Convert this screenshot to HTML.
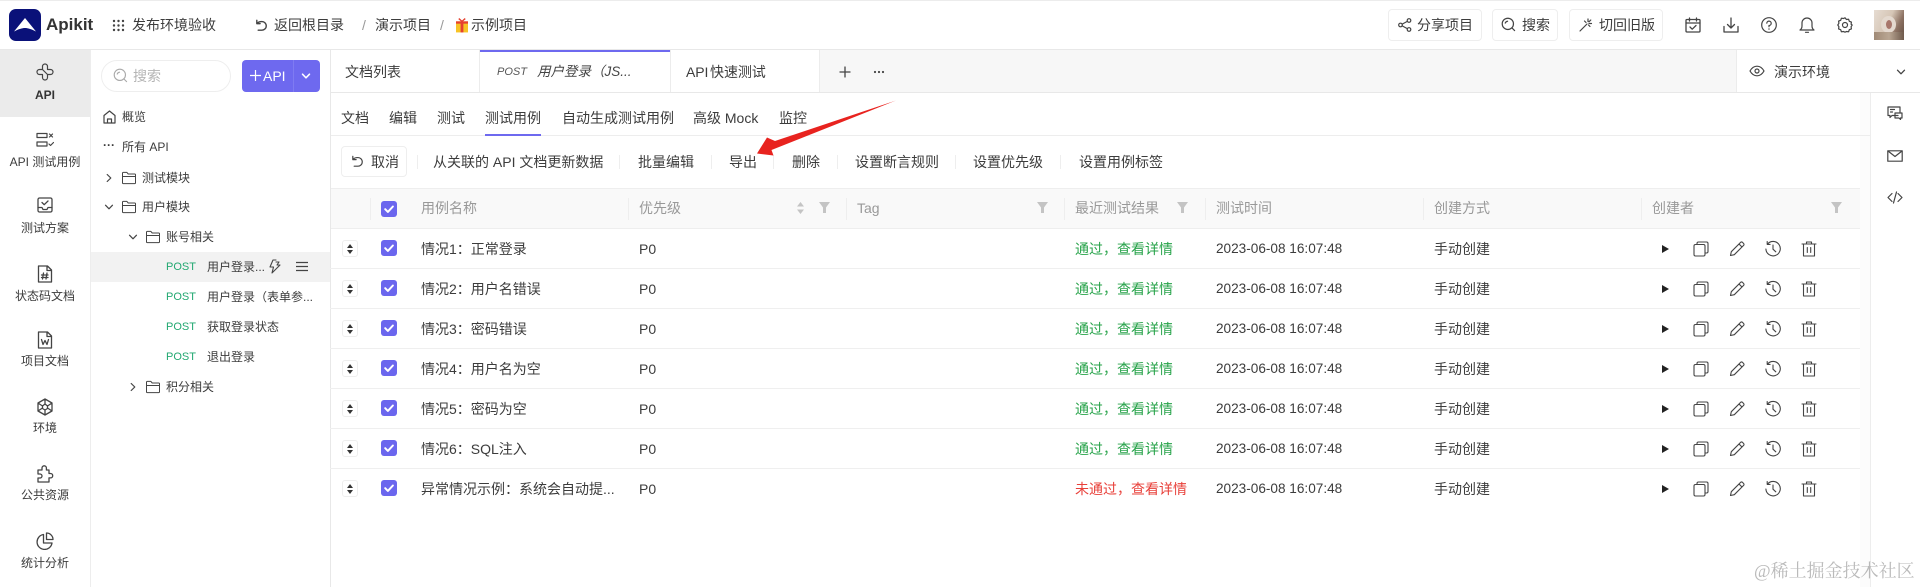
<!DOCTYPE html>
<html lang="zh-CN"><head><meta charset="utf-8"><title>Apikit</title>
<style>
*{box-sizing:border-box}
html,body{margin:0;padding:0;width:1920px;height:587px;overflow:hidden;background:#fff}
body{position:relative;font:14px/20px "Liberation Sans","Noto Sans CJK SC",sans-serif;color:#3c3c3c}
.t{position:absolute;white-space:nowrap;line-height:20px}
.s{font-size:12px}
.a{position:absolute}
svg.i{position:absolute;fill:none;stroke:currentColor;stroke-width:1.5;stroke-linecap:round;stroke-linejoin:round;color:#444}
.btn{position:absolute;border:1px solid #eeeeee;border-radius:4px;background:#fff}
.sep{position:absolute;width:1px;background:#eeeeee}
.h{position:absolute;color:#999;white-space:nowrap;top:198px;line-height:20px}
.r{position:absolute;left:330px;width:1530px;height:40px;border-bottom:1px solid #efefef}
.r .t{top:10px}
.d{position:absolute;left:12px;top:11px;width:16px;height:17px;border:1px solid #eee;border-radius:3px;background:#fff}
.d:before,.d:after{content:"";position:absolute;left:4px;border-left:3px solid transparent;border-right:3px solid transparent}
.d:before{top:3px;border-bottom:4px solid #333}
.d:after{top:9px;border-top:4px solid #333}
.c{position:absolute;width:16px;height:16px;border-radius:3px;background:#6b66ee}
.c svg{position:absolute;left:2px;top:2px;width:12px;height:12px;fill:none;stroke:#fff;stroke-width:2;stroke-linecap:round;stroke-linejoin:round}
.ok{color:#27a34a}.no{color:#e8403a}
.post{color:#22a871;font-size:11px}
.ti{width:18px;height:18px;top:11px}
</style></head><body>
<svg width="0" height="0" style="position:absolute">
<defs>
<symbol id="folder" viewBox="0 0 16 16"><path d="M1.5 3.2a.8.8 0 0 1 .8-.8h3.6l1.3 1.6h6.5a.8.8 0 0 1 .8.8v8a.8.8 0 0 1-.8.8H2.300a.8.8 0 0 1-.8-.8zM1.500 6.500h13"/></symbol>
<symbol id="copy" viewBox="0 0 18 18"><rect x="2" y="4.500" width="11" height="11.500" rx="1.500"/><path d="M5 4.500V3.500A1.500 1.500 0 0 1 6.500 2h8A1.500 1.500 0 0 1 16 3.500v8a1.500 1.500 0 0 1-1.500 1.500H13"/></symbol>
<symbol id="pen" viewBox="0 0 18 18"><path d="M2.500 15.500l.8-3.800L12.600 2.400a1.300 1.300 0 0 1 1.900 0l1.100 1.100a1.300 1.300 0 0 1 0 1.900L6.300 14.700zM11 4l3 3"/></symbol>
<symbol id="hist" viewBox="0 0 18 18"><path d="M3.600 4A7.200 7.200 0 1 1 1.900 9M3.200 1.500V4.400H6.100M9 5v4.200l2.800 2.600"/></symbol>
<symbol id="trash" viewBox="0 0 18 18"><path d="M2 4h14M6.500 4V2h5v2M3.500 4v12h11V4M7.300 7.500v5M10.700 7.500v5"/></symbol>
<symbol id="check" viewBox="0 0 12 12"><path d="M2.200 6.200l2.700 2.700 5-5.400"/></symbol>
<symbol id="chev" viewBox="0 0 12 12"><path d="M2.500 4.200L6 7.800l3.500-3.600"/></symbol>
<symbol id="chevr" viewBox="0 0 12 12"><path d="M4.200 2.500L7.800 6l-3.600 3.500"/></symbol>
<symbol id="undo" viewBox="0 0 16 16"><path d="M3 2.500V6h3.500M3.200 6C4 4.500 5.500 3.800 8.500 3.800a4.600 4.600 0 0 1 0 9.200H4.500"/></symbol>
<symbol id="search" viewBox="0 0 16 16"><circle cx="7.300" cy="7.300" r="6"/><path d="M11.700 11.700l2.800 2.800M4.500 6.500a3 3 0 0 1 2.500-2"/></symbol>
</defs>
</svg>

<!-- top bar -->
<div class="a" style="left:0;top:0;width:1920px;height:1px;background:#ececec"></div>
<div class="a" style="left:0;top:49px;width:1920px;height:1px;background:#e8e8e8"></div>
<div class="a" style="left:9px;top:9px;width:32px;height:32px;border-radius:7px;background:#0a1179"></div>
<svg class="a" style="left:9px;top:9px" width="32" height="32" viewBox="0 0 32 32"><path d="M16 9L27 22.500C22 20 19 19 16 19 13 19 10 20 5 22.500z" fill="#fff"/></svg>
<div class="t" style="left:46px;top:15px;font-size:17px;font-weight:700;color:#333">Apikit</div>
<svg class="a" style="left:112px;top:19px" width="13" height="13" viewBox="0 0 13 13" fill="#444"><circle cx="2" cy="2" r="1.200"/><circle cx="6.500" cy="2" r="1.200"/><circle cx="11" cy="2" r="1.200"/><circle cx="2" cy="6.500" r="1.200"/><circle cx="6.500" cy="6.500" r="1.200"/><circle cx="11" cy="6.500" r="1.200"/><circle cx="2" cy="11" r="1.200"/><circle cx="6.500" cy="11" r="1.200"/><circle cx="11" cy="11" r="1.200"/></svg>
<div class="t" style="left:132px;top:15px">发布环境验收</div>
<svg class="i" style="left:254px;top:18px" width="15" height="15" viewBox="0 0 16 16"><use href="#undo"/></svg>
<div class="t" style="left:274px;top:15px">返回根目录</div>
<div class="t" style="left:362px;top:15px;color:#999">/</div>
<div class="t" style="left:375px;top:15px">演示项目</div>
<div class="t" style="left:440px;top:15px;color:#999">/</div>
<svg class="a" style="left:456px;top:18px" width="12" height="15" viewBox="0 0 13 15"><rect x="0" y="3" width="13" height="12" fill="#f7c325"/><rect x="5" y="3" width="3" height="12" fill="#e6402f"/><rect x="0" y="3" width="13" height="2.500" fill="#e6402f"/><path d="M6.500 3L3 0M6.500 3L10 0" stroke="#e6402f" stroke-width="1.500"/></svg>
<div class="t" style="left:471px;top:15px">示例项目</div>

<div class="btn" style="left:1388px;top:9px;width:94px;height:32px"></div>
<svg class="i" style="left:1398px;top:18px;stroke-width:1.200" width="14" height="14" viewBox="0 0 14 14"><circle cx="2.500" cy="7" r="1.800"/><circle cx="11" cy="2.500" r="1.800"/><circle cx="11" cy="11.500" r="1.800"/><path d="M4.200 6.100l5.100-2.700M4.200 7.900l5.100 2.700"/></svg>
<div class="t" style="left:1417px;top:15px">分享项目</div>
<div class="btn" style="left:1492px;top:9px;width:66px;height:32px"></div>
<svg class="i" style="left:1501px;top:17px;stroke-width:1.300" width="15" height="15"><use href="#search"/></svg>
<div class="t" style="left:1522px;top:15px">搜索</div>
<div class="btn" style="left:1569px;top:9px;width:94px;height:32px"></div>
<svg class="i" style="left:1579px;top:18px;stroke-width:1.200" width="14" height="14" viewBox="0 0 14 14"><path d="M1 13L8 6M9 1v2.500M12.500 5.500H10M11.800 2l-1.800 1.800M5.500 3l1.500 1.500M11 8.500L9.500 7"/></svg>
<div class="t" style="left:1599px;top:15px">切回旧版</div>

<svg class="i" style="left:1685px;top:17px;stroke-width:1.300" width="16" height="16" viewBox="0 0 16 16"><rect x="1" y="2.500" width="14" height="12.500" rx="1"/><path d="M1 6h14M4.500 1v3M11.500 1v3M5 10l2.200 2.200L11 8.500"/></svg>
<svg class="i" style="left:1723px;top:17px;stroke-width:1.300" width="16" height="16" viewBox="0 0 16 16"><path d="M1 9.500V15h14V9.500M8 1v9.500M4.500 7.500L8 11l3.500-3.500"/></svg>
<svg class="i" style="left:1761px;top:17px;stroke-width:1.200" width="16" height="16" viewBox="0 0 16 16"><circle cx="8" cy="8" r="7.300"/><path d="M5.800 6.200A2.200 2.200 0 1 1 8 8.500v1.300M8 11.800v.4"/></svg>
<svg class="i" style="left:1799px;top:17px;stroke-width:1.200" width="16" height="16" viewBox="0 0 16 16"><path d="M1 13h14c-1.500-1-2-2-2-4V6A5 5 0 0 0 3 6v3c0 2-.5 3-2 4zM6.500 15.300h3"/></svg>
<svg class="i" style="left:1837px;top:17px;stroke-width:1.200" width="16" height="16" viewBox="0 0 16 16"><path d="M8 .8l1.400 1.700 2.200-.3.700 2.100 2.100.8-.3 2.200L15.200 8l-1.100 1.700.3 2.200-2.100.8-.7 2.100-2.200-.3L8 15.200l-1.400-.7-2.200.3-.7-2.100-2.100-.8.3-2.200L.8 8l1.100-1.700-.3-2.200 2.100-.8.700-2.100 2.200.3z"/><circle cx="8" cy="8" r="2.500"/></svg>
<div class="a" style="left:1874px;top:10px;width:30px;height:30px;background:linear-gradient(115deg,#e6dcd2 0%,#d6c6b6 45%,#8d7263 72%,#5f4c40 100%);overflow:hidden"><div class="a" style="left:7px;top:6px;width:15px;height:17px;border-radius:50%;background:#e4d9cf"></div><div class="a" style="left:12px;top:10px;width:6px;height:9px;border-radius:50%;background:#a8776c"></div><div class="a" style="left:0;top:22px;width:30px;height:8px;background:linear-gradient(90deg,#a08a76,#b9a693,#6f5a4c)"></div></div>

<!-- left sidebar -->
<div class="a" style="left:90px;top:50px;width:1px;height:537px;background:#ededed"></div>
<div class="a" style="left:0;top:50px;width:90px;height:67px;background:#ebebeb"></div>
<svg class="i" style="left:36px;top:63px;stroke-width:1.200" width="18" height="18" viewBox="0 0 18 18"><path d="M6.500 6.500V3.500a2.500 2.500 0 0 1 5 0V6.500H14.500a2.500 2.500 0 0 1 0 5H11.500V14.500a2.500 2.500 0 0 1-5 0V11.500H3.500a2.500 2.500 0 0 1 0-5H6.500M6.500 6.500C8 8 10 10 11.500 11.500"/></svg>
<div class="t s" style="left:0;width:90px;text-align:center;top:85px;font-weight:700;color:#333">API</div>
<svg class="i" style="left:36px;top:132px;stroke-width:1.200" width="18" height="16" viewBox="0 0 18 16"><rect x="1" y="1.500" width="10" height="4"/><rect x="1" y="10" width="10" height="4"/><path d="M13.500 2l3 3M16.500 2l-3 3M13 12l1.500 1.500 3-3"/></svg>
<div class="t s" style="left:0;width:90px;text-align:center;top:152px">API 测试用例</div>
<svg class="i" style="left:37px;top:197px;stroke-width:1.300" width="16" height="16" viewBox="0 0 16 16"><rect x="1" y="1" width="14" height="14" rx="1.500"/><path d="M1 10.500h4l1 2h4l1-2h4M5 5.500l2.200 2.200L11 4"/></svg>
<div class="t s" style="left:0;width:90px;text-align:center;top:218px">测试方案</div>
<svg class="i" style="left:37px;top:265px;stroke-width:1.300" width="16" height="18" viewBox="0 0 16 18"><path d="M1.500 1h9l4 4v12h-13zM10 1v4.500h4.500M6.500 8l-1 6M10 8l-1 6M4.500 10h6.500M4.500 12.500h6.500"/></svg>
<div class="t s" style="left:0;width:90px;text-align:center;top:286px">状态码文档</div>
<svg class="i" style="left:37px;top:331px;stroke-width:1.300" width="16" height="18" viewBox="0 0 16 18"><path d="M1.500 1h9l4 4v12h-13zM10 1v4.500h4.500M4.500 8.500l1.500 5 2-4 2 4 1.500-5"/></svg>
<div class="t s" style="left:0;width:90px;text-align:center;top:351px">项目文档</div>
<svg class="i" style="left:37px;top:398px;stroke-width:1.300" width="16" height="18" viewBox="0 0 16 18"><path d="M8 1l7 4v8l-7 4-7-4V5zM8 1v5M1 5l4.500 3M15 5l-4.500 3M8 17v-5M1 13l4.500-3M15 13l-4.500-3M8 6l2.500 2v2.500L8 12l-2.500-1.500V8z"/></svg>
<div class="t s" style="left:0;width:90px;text-align:center;top:418px">环境</div>
<svg class="i" style="left:36px;top:465px;stroke-width:1.300" width="18" height="18" viewBox="0 0 18 18"><path d="M2 5h4V3a2.200 2.200 0 0 1 4.400 0v2H13v3.500h1.500a2.200 2.200 0 0 1 0 4.400H13V17H2v-4h2a2 2 0 0 0 0-4H2z"/></svg>
<div class="t s" style="left:0;width:90px;text-align:center;top:485px">公共资源</div>
<svg class="i" style="left:36px;top:532px;stroke-width:1.300" width="18" height="18" viewBox="0 0 18 18"><path d="M7.500 2.500a7.500 7.500 0 1 0 8.500 8.500H7.500zM10.500 1a6.500 6.500 0 0 1 6.500 6.500h-6.500z"/></svg>
<div class="t s" style="left:0;width:90px;text-align:center;top:553px">统计分析</div>

<!-- tree -->
<div class="a" style="left:330px;top:50px;width:1px;height:537px;background:#e8e8e8"></div>
<div class="a" style="left:101px;top:60px;width:130px;height:32px;border:1px solid #eeeeee;border-radius:16px"></div>
<svg class="i" style="left:113px;top:68px;color:#aaa;stroke-width:1.200" width="15" height="15"><use href="#search"/></svg>
<div class="t" style="left:133px;top:66px;color:#b5b5b5">搜索</div>
<div class="a" style="left:242px;top:60px;width:78px;height:32px;border-radius:4px;background:#6e69ef"></div>
<div class="a" style="left:293px;top:60px;width:1px;height:32px;background:#7f7bf2"></div>
<svg class="a" style="left:250px;top:70px" width="11" height="11" viewBox="0 0 11 11"><path d="M5.500 0v11M0 5.500h11" stroke="#fff" stroke-width="1.200"/></svg>
<div class="t" style="left:263px;top:66px;color:#fff">API</div>
<svg class="i" style="left:300px;top:70px;color:#fff" width="12" height="12"><use href="#chev"/></svg>

<svg class="i" style="left:103px;top:110px;stroke-width:1.200" width="13" height="14" viewBox="0 0 13 14"><path d="M1 5.500L6.500 1 12 5.500V13H1zM4.500 13V9h4v4"/></svg>
<div class="t s" style="left:122px;top:107px">概览</div>
<div class="t s" style="left:103px;top:135px;font-weight:700">···</div>
<div class="t s" style="left:122px;top:137px">所有 API</div>
<svg class="i" style="left:103px;top:172px;stroke-width:1.200" width="12" height="12"><use href="#chevr"/></svg>
<svg class="i" style="left:121px;top:170px;stroke-width:1" width="16" height="16"><use href="#folder"/></svg>
<div class="t s" style="left:142px;top:168px">测试模块</div>
<svg class="i" style="left:103px;top:201px;stroke-width:1.200" width="12" height="12"><use href="#chev"/></svg>
<svg class="i" style="left:121px;top:199px;stroke-width:1" width="16" height="16"><use href="#folder"/></svg>
<div class="t s" style="left:142px;top:197px">用户模块</div>
<svg class="i" style="left:127px;top:231px;stroke-width:1.200" width="12" height="12"><use href="#chev"/></svg>
<svg class="i" style="left:145px;top:229px;stroke-width:1" width="16" height="16"><use href="#folder"/></svg>
<div class="t s" style="left:166px;top:227px">账号相关</div>
<div class="a" style="left:91px;top:252px;width:239px;height:30px;background:#f2f2f2"></div>
<div class="t post" style="left:166px;top:257px">POST</div>
<div class="t s" style="left:207px;top:257px">用户登录...</div>
<svg class="i" style="left:269px;top:259px;stroke-width:1.100" width="13" height="15" viewBox="0 0 13 15"><path d="M7 1H4L1 8h3.500L3 14l8-8H8l2-3H7"/></svg>
<svg class="i" style="left:296px;top:261px;stroke-width:1.300" width="12" height="11" viewBox="0 0 12 11"><path d="M0 1.500h12M0 5.500h12M0 9.500h12"/></svg>
<div class="t post" style="left:166px;top:287px">POST</div>
<div class="t s" style="left:207px;top:287px">用户登录（表单参...</div>
<div class="t post" style="left:166px;top:317px">POST</div>
<div class="t s" style="left:207px;top:317px">获取登录状态</div>
<div class="t post" style="left:166px;top:347px">POST</div>
<div class="t s" style="left:207px;top:347px">退出登录</div>
<svg class="i" style="left:127px;top:381px;stroke-width:1.200" width="12" height="12"><use href="#chevr"/></svg>
<svg class="i" style="left:145px;top:379px;stroke-width:1" width="16" height="16"><use href="#folder"/></svg>
<div class="t s" style="left:166px;top:377px">积分相关</div>

<!-- tabs -->
<div class="a" style="left:820px;top:50px;width:916px;height:42px;background:#f7f7f7"></div>
<div class="a" style="left:331px;top:92px;width:1589px;height:1px;background:#e8e8e8"></div>
<div class="a" style="left:479px;top:50px;width:1px;height:42px;background:#ececec"></div>
<div class="a" style="left:480px;top:50px;width:191px;height:2px;background:#6e69ef"></div>
<div class="a" style="left:670px;top:50px;width:1px;height:42px;background:#ececec"></div>
<div class="a" style="left:819px;top:50px;width:1px;height:42px;background:#ececec"></div>
<div class="a" style="left:1736px;top:50px;width:1px;height:42px;background:#ececec"></div>
<div class="t" style="left:345px;top:62px">文档列表</div>
<div class="t" style="left:497px;top:62px;font-size:11px;font-style:italic;color:#555">POST</div>
<div class="t" style="left:537px;top:62px;font-style:italic;font-size:13.500px;color:#444">用户登录（JS...</div>
<div class="t" style="left:686px;top:62px;word-spacing:-2px;letter-spacing:-.1px">API 快速测试</div>
<svg class="i" style="left:839px;top:66px;stroke-width:1.300" width="12" height="12" viewBox="0 0 12 12"><path d="M6 1v10M1 6h10"/></svg>
<svg class="a" style="left:873px;top:70px" width="12" height="4" viewBox="0 0 12 4" fill="#444"><circle cx="2" cy="2" r="1.100"/><circle cx="6" cy="2" r="1.100"/><circle cx="10" cy="2" r="1.100"/></svg>
<svg class="i" style="left:1749px;top:65px;stroke-width:1.200" width="16" height="12" viewBox="0 0 16 12"><path d="M1 6c1.800-3.200 4.200-4.800 7-4.800s5.200 1.600 7 4.800c-1.800 3.200-4.200 4.800-7 4.800S2.800 9.200 1 6z"/><circle cx="8" cy="6" r="2"/></svg>
<div class="t" style="left:1774px;top:62px">演示环境</div>
<svg class="i" style="left:1895px;top:66px;stroke-width:1.300" width="12" height="12"><use href="#chev"/></svg>

<!-- right panel -->
<div class="a" style="left:1860px;top:93px;width:10px;height:494px;background:#fcfcfc"></div>
<div class="a" style="left:1870px;top:93px;width:1px;height:494px;background:#ededed"></div>
<svg class="i" style="left:1887px;top:106px;stroke-width:1.200" width="16" height="14" viewBox="0 0 16 14"><path d="M11 9.500H5L3 11.500v-2H1V1h12v5M3.500 3.500h4M3.500 6h2M8 7h7v5h-1.500v1.500L12 12H8z"/></svg>
<svg class="i" style="left:1887px;top:150px;stroke-width:1.200" width="16" height="12" viewBox="0 0 16 12"><rect x=".8" y=".8" width="14.400" height="10.400"/><path d="M1 1l7 5.500L15 1"/></svg>
<svg class="i" style="left:1887px;top:191px;stroke-width:1.200" width="16" height="13" viewBox="0 0 16 13"><path d="M5 2.500L1 6.500l4 4M11 2.500l4 4-4 4M9.500 1L6.500 12"/></svg>

<!-- sub tabs -->
<div class="t" style="left:341px;top:108px">文档</div>
<div class="t" style="left:389px;top:108px">编辑</div>
<div class="t" style="left:437px;top:108px">测试</div>
<div class="t" style="left:485px;top:108px">测试用例</div>
<div class="t" style="left:562px;top:108px">自动生成测试用例</div>
<div class="t" style="left:693px;top:108px">高级 Mock</div>
<div class="t" style="left:779px;top:108px">监控</div>
<div class="a" style="left:331px;top:135px;width:1539px;height:1px;background:#ededed"></div>
<div class="a" style="left:485px;top:134px;width:56px;height:2px;background:#6e69ef"></div>

<!-- toolbar -->
<div class="btn" style="left:341px;top:146px;width:66px;height:31px"></div>
<svg class="i" style="left:350px;top:154px;stroke-width:1.300" width="15" height="15" viewBox="0 0 16 16"><use href="#undo"/></svg>
<div class="t" style="left:371px;top:152px">取消</div>
<div class="sep" style="left:417px;top:155px;height:14px"></div>
<div class="t" style="left:433px;top:152px">从关联的 API 文档更新数据</div>
<div class="sep" style="left:619px;top:155px;height:14px"></div>
<div class="t" style="left:638px;top:152px">批量编辑</div>
<div class="sep" style="left:711px;top:155px;height:14px"></div>
<div class="t" style="left:729px;top:152px">导出</div>
<div class="sep" style="left:773px;top:155px;height:14px"></div>
<div class="t" style="left:792px;top:152px">删除</div>
<div class="sep" style="left:837px;top:155px;height:14px"></div>
<div class="t" style="left:855px;top:152px">设置断言规则</div>
<div class="sep" style="left:955px;top:155px;height:14px"></div>
<div class="t" style="left:973px;top:152px">设置优先级</div>
<div class="sep" style="left:1060px;top:155px;height:14px"></div>
<div class="t" style="left:1079px;top:152px">设置用例标签</div>

<!-- table head -->
<div class="a" style="left:331px;top:188px;width:1529px;height:41px;background:#f9f9f9;border-top:1px solid #eeeeee;border-bottom:1px solid #eeeeee"></div>
<div class="sep" style="left:370px;top:198px;height:22px"></div>
<div class="c" style="left:381px;top:201px"><svg><use href="#check"/></svg></div>
<div class="h" style="left:421px">用例名称</div>
<div class="sep" style="left:628px;top:198px;height:22px"></div>
<div class="h" style="left:639px">优先级</div>
<svg class="a" style="left:796px;top:201px" width="9" height="14" viewBox="0 0 9 14" fill="#c4c4c4"><path d="M4.500 1L8 5.500H1zM4.500 13L1 8.500h7z"/></svg>
<svg class="a" style="left:819px;top:202px" width="11" height="12" viewBox="0 0 11 12" fill="#c4c4c4"><path d="M0 0h11L7 5.500V11H4V5.500z"/></svg>
<div class="sep" style="left:846px;top:198px;height:22px"></div>
<div class="h" style="left:857px">Tag</div>
<svg class="a" style="left:1037px;top:202px" width="11" height="12" viewBox="0 0 11 12" fill="#c4c4c4"><path d="M0 0h11L7 5.500V11H4V5.500z"/></svg>
<div class="sep" style="left:1064px;top:198px;height:22px"></div>
<div class="h" style="left:1075px">最近测试结果</div>
<svg class="a" style="left:1177px;top:202px" width="11" height="12" viewBox="0 0 11 12" fill="#c4c4c4"><path d="M0 0h11L7 5.500V11H4V5.500z"/></svg>
<div class="sep" style="left:1205px;top:198px;height:22px"></div>
<div class="h" style="left:1216px">测试时间</div>
<div class="sep" style="left:1423px;top:198px;height:22px"></div>
<div class="h" style="left:1434px">创建方式</div>
<div class="sep" style="left:1641px;top:198px;height:22px"></div>
<div class="h" style="left:1652px">创建者</div>
<svg class="a" style="left:1831px;top:202px" width="11" height="12" viewBox="0 0 11 12" fill="#c4c4c4"><path d="M0 0h11L7 5.500V11H4V5.500z"/></svg>

<!-- rows -->
<div class="r" style="top:229px"><div class="d"></div><div class="c" style="left:51px;top:11px"><svg><use href="#check"/></svg></div><div class="t" style="left:91px">情况1：正常登录</div><div class="t" style="left:309px">P0</div><div class="t ok" style="left:745px">通过，查看详情</div><div class="t" style="left:886px;font-size:13.600px">2023-06-08 16:07:48</div><div class="t" style="left:1104px">手动创建</div><svg class="a" style="left:1331px;top:15px" width="9" height="10" viewBox="0 0 9 10" fill="#222"><path d="M1 1l7 4-7 4z"/></svg><svg class="i ti" style="left:1362px;stroke-width:1.100"><use href="#copy"/></svg><svg class="i ti" style="left:1398px;stroke-width:1.100"><use href="#pen"/></svg><svg class="i ti" style="left:1434px;stroke-width:1.100"><use href="#hist"/></svg><svg class="i ti" style="left:1470px;stroke-width:1.100"><use href="#trash"/></svg></div>
<div class="r" style="top:269px"><div class="d"></div><div class="c" style="left:51px;top:11px"><svg><use href="#check"/></svg></div><div class="t" style="left:91px">情况2：用户名错误</div><div class="t" style="left:309px">P0</div><div class="t ok" style="left:745px">通过，查看详情</div><div class="t" style="left:886px;font-size:13.600px">2023-06-08 16:07:48</div><div class="t" style="left:1104px">手动创建</div><svg class="a" style="left:1331px;top:15px" width="9" height="10" viewBox="0 0 9 10" fill="#222"><path d="M1 1l7 4-7 4z"/></svg><svg class="i ti" style="left:1362px;stroke-width:1.100"><use href="#copy"/></svg><svg class="i ti" style="left:1398px;stroke-width:1.100"><use href="#pen"/></svg><svg class="i ti" style="left:1434px;stroke-width:1.100"><use href="#hist"/></svg><svg class="i ti" style="left:1470px;stroke-width:1.100"><use href="#trash"/></svg></div>
<div class="r" style="top:309px"><div class="d"></div><div class="c" style="left:51px;top:11px"><svg><use href="#check"/></svg></div><div class="t" style="left:91px">情况3：密码错误</div><div class="t" style="left:309px">P0</div><div class="t ok" style="left:745px">通过，查看详情</div><div class="t" style="left:886px;font-size:13.600px">2023-06-08 16:07:48</div><div class="t" style="left:1104px">手动创建</div><svg class="a" style="left:1331px;top:15px" width="9" height="10" viewBox="0 0 9 10" fill="#222"><path d="M1 1l7 4-7 4z"/></svg><svg class="i ti" style="left:1362px;stroke-width:1.100"><use href="#copy"/></svg><svg class="i ti" style="left:1398px;stroke-width:1.100"><use href="#pen"/></svg><svg class="i ti" style="left:1434px;stroke-width:1.100"><use href="#hist"/></svg><svg class="i ti" style="left:1470px;stroke-width:1.100"><use href="#trash"/></svg></div>
<div class="r" style="top:349px"><div class="d"></div><div class="c" style="left:51px;top:11px"><svg><use href="#check"/></svg></div><div class="t" style="left:91px">情况4：用户名为空</div><div class="t" style="left:309px">P0</div><div class="t ok" style="left:745px">通过，查看详情</div><div class="t" style="left:886px;font-size:13.600px">2023-06-08 16:07:48</div><div class="t" style="left:1104px">手动创建</div><svg class="a" style="left:1331px;top:15px" width="9" height="10" viewBox="0 0 9 10" fill="#222"><path d="M1 1l7 4-7 4z"/></svg><svg class="i ti" style="left:1362px;stroke-width:1.100"><use href="#copy"/></svg><svg class="i ti" style="left:1398px;stroke-width:1.100"><use href="#pen"/></svg><svg class="i ti" style="left:1434px;stroke-width:1.100"><use href="#hist"/></svg><svg class="i ti" style="left:1470px;stroke-width:1.100"><use href="#trash"/></svg></div>
<div class="r" style="top:389px"><div class="d"></div><div class="c" style="left:51px;top:11px"><svg><use href="#check"/></svg></div><div class="t" style="left:91px">情况5：密码为空</div><div class="t" style="left:309px">P0</div><div class="t ok" style="left:745px">通过，查看详情</div><div class="t" style="left:886px;font-size:13.600px">2023-06-08 16:07:48</div><div class="t" style="left:1104px">手动创建</div><svg class="a" style="left:1331px;top:15px" width="9" height="10" viewBox="0 0 9 10" fill="#222"><path d="M1 1l7 4-7 4z"/></svg><svg class="i ti" style="left:1362px;stroke-width:1.100"><use href="#copy"/></svg><svg class="i ti" style="left:1398px;stroke-width:1.100"><use href="#pen"/></svg><svg class="i ti" style="left:1434px;stroke-width:1.100"><use href="#hist"/></svg><svg class="i ti" style="left:1470px;stroke-width:1.100"><use href="#trash"/></svg></div>
<div class="r" style="top:429px"><div class="d"></div><div class="c" style="left:51px;top:11px"><svg><use href="#check"/></svg></div><div class="t" style="left:91px">情况6：SQL注入</div><div class="t" style="left:309px">P0</div><div class="t ok" style="left:745px">通过，查看详情</div><div class="t" style="left:886px;font-size:13.600px">2023-06-08 16:07:48</div><div class="t" style="left:1104px">手动创建</div><svg class="a" style="left:1331px;top:15px" width="9" height="10" viewBox="0 0 9 10" fill="#222"><path d="M1 1l7 4-7 4z"/></svg><svg class="i ti" style="left:1362px;stroke-width:1.100"><use href="#copy"/></svg><svg class="i ti" style="left:1398px;stroke-width:1.100"><use href="#pen"/></svg><svg class="i ti" style="left:1434px;stroke-width:1.100"><use href="#hist"/></svg><svg class="i ti" style="left:1470px;stroke-width:1.100"><use href="#trash"/></svg></div>
<div class="r" style="top:469px;border-bottom:0"><div class="d"></div><div class="c" style="left:51px;top:11px"><svg><use href="#check"/></svg></div><div class="t" style="left:91px">异常情况示例：系统会自动提...</div><div class="t" style="left:309px">P0</div><div class="t no" style="left:745px">未通过，查看详情</div><div class="t" style="left:886px;font-size:13.600px">2023-06-08 16:07:48</div><div class="t" style="left:1104px">手动创建</div><svg class="a" style="left:1331px;top:15px" width="9" height="10" viewBox="0 0 9 10" fill="#222"><path d="M1 1l7 4-7 4z"/></svg><svg class="i ti" style="left:1362px;stroke-width:1.100"><use href="#copy"/></svg><svg class="i ti" style="left:1398px;stroke-width:1.100"><use href="#pen"/></svg><svg class="i ti" style="left:1434px;stroke-width:1.100"><use href="#hist"/></svg><svg class="i ti" style="left:1470px;stroke-width:1.100"><use href="#trash"/></svg></div>

<!-- arrow -->
<svg class="a" style="left:750px;top:95px" width="150" height="65" viewBox="750 95 150 65"><path d="M896 100.500L775 141 767 137.500 757 153.500 773.500 155.500 771.500 150z" fill="#e8231f"/></svg>

<!-- watermark -->
<div class="t" style="left:1754px;top:561px;font-size:18px;font-family:'Liberation Serif','Noto Serif CJK SC',serif;color:rgba(140,140,140,.6)">@稀土掘金技术社区</div>
</body></html>
